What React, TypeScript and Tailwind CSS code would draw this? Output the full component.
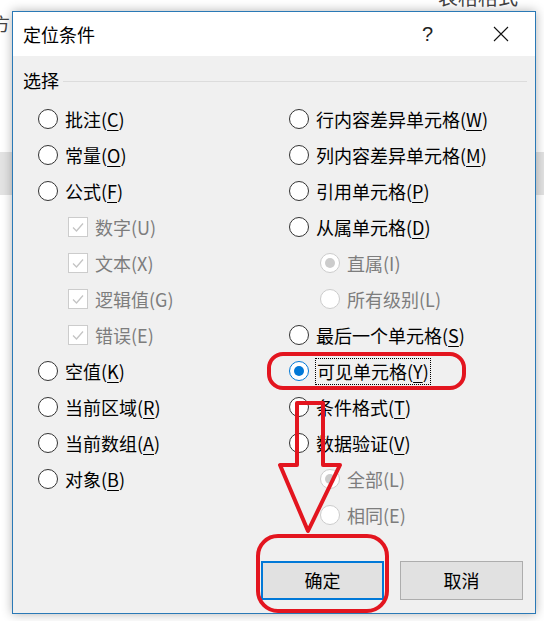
import React from "react";

type Item = {
  label: string;
  hotkey: string;
  kind: "radio" | "check";
  sub?: boolean;
  checked?: boolean;
  disabled?: boolean;
  focus?: boolean;
};

const leftItems: Item[] = [
  { label: "批注", hotkey: "C", kind: "radio" },
  { label: "常量", hotkey: "O", kind: "radio" },
  { label: "公式", hotkey: "F", kind: "radio" },
  { label: "数字", hotkey: "U", kind: "check", sub: true, checked: true, disabled: true },
  { label: "文本", hotkey: "X", kind: "check", sub: true, checked: true, disabled: true },
  { label: "逻辑值", hotkey: "G", kind: "check", sub: true, checked: true, disabled: true },
  { label: "错误", hotkey: "E", kind: "check", sub: true, checked: true, disabled: true },
  { label: "空值", hotkey: "K", kind: "radio" },
  { label: "当前区域", hotkey: "R", kind: "radio" },
  { label: "当前数组", hotkey: "A", kind: "radio" },
  { label: "对象", hotkey: "B", kind: "radio" },
];

const rightItems: Item[] = [
  { label: "行内容差异单元格", hotkey: "W", kind: "radio" },
  { label: "列内容差异单元格", hotkey: "M", kind: "radio" },
  { label: "引用单元格", hotkey: "P", kind: "radio" },
  { label: "从属单元格", hotkey: "D", kind: "radio" },
  { label: "直属", hotkey: "I", kind: "radio", sub: true, checked: true, disabled: true },
  { label: "所有级别", hotkey: "L", kind: "radio", sub: true, disabled: true },
  { label: "最后一个单元格", hotkey: "S", kind: "radio" },
  { label: "可见单元格", hotkey: "Y", kind: "radio", checked: true, focus: true },
  { label: "条件格式", hotkey: "T", kind: "radio" },
  { label: "数据验证", hotkey: "V", kind: "radio" },
  { label: "全部", hotkey: "L", kind: "radio", sub: true, checked: true, disabled: true },
  { label: "相同", hotkey: "E", kind: "radio", sub: true, disabled: true },
];

function Radio({ checked, disabled }: { checked?: boolean; disabled?: boolean }) {
  const ring = disabled ? "border-[#cccccc]" : checked ? "border-[#0078d7]" : "border-[#333333]";
  return (
    <span className={`w-[20px] h-[20px] shrink-0 rounded-full border bg-white flex items-center justify-center ${ring}`}>
      {checked && (
        <span className={`w-[10px] h-[10px] rounded-full ${disabled ? "bg-[#cccccc]" : "bg-[#0078d7]"}`} />
      )}
    </span>
  );
}

function Check() {
  return (
    <span className="w-[20px] h-[20px] shrink-0 border border-[#cccccc] bg-white flex items-center justify-center">
      <svg width="14" height="14" viewBox="0 0 14 14">
        <polyline points="2,7.5 5.5,11 12,3.5" fill="none" stroke="#c4c4c4" strokeWidth="1.3" />
      </svg>
    </span>
  );
}

function Option({ item, indent }: { item: Item; indent: string }) {
  const text = (
    <span className={item.disabled ? "text-[#7d7d7d]" : "text-black"}>
      {item.label}(
      {item.disabled ? item.hotkey : <u className="underline-offset-[3px]">{item.hotkey}</u>})
    </span>
  );
  return (
    <div className={`h-[36px] flex items-center gap-[6px] ${item.sub ? indent : ""}`}>
      {item.kind === "radio" ? <Radio checked={item.checked} disabled={item.disabled} /> : <Check />}
      {item.focus ? (
        <span className="border border-dotted border-black px-[1px] h-[27px] flex items-center">{text}</span>
      ) : (
        <span className="pl-[1px]">{text}</span>
      )}
    </div>
  );
}

function Spreadsheet() {
  return (
    <div className="w-[544px] h-[621px] bg-white bg-[linear-gradient(to_bottom,transparent_152px,#e3e3e3_152px,#e3e3e3_195px,transparent_195px),linear-gradient(#d9d9d9_1px,transparent_1px),linear-gradient(90deg,#d9d9d9_1px,transparent_1px)] bg-[size:100%_100%,104px_28px,104px_28px] bg-[position:0_0,25px_27px,25px_27px] bg-no-repeat">
      <div className="h-[11px] overflow-hidden">
        <div className="pl-[438px] -mt-[15px] text-[20px] text-[#444] leading-[24px]">表格格式</div>
      </div>
      <div className="-ml-[8px] mt-[2px] text-[18px] text-[#444] leading-[20px]">方</div>
    </div>
  );
}

export default function App() {
  return (
    <div className="relative w-[544px] h-[621px] overflow-hidden font-['Noto_Sans_CJK_SC','Microsoft_YaHei',sans-serif]">
      <Spreadsheet />

      <div className="absolute left-[12px] top-[11px] w-[524px] h-[603px] border border-[#2a79b6] bg-[#f0f0f0] flex flex-col shadow-[0_0_10px_rgba(0,0,0,0.3)]">
        <div className="h-[44px] bg-white flex items-center pl-[10px] shrink-0">
          <span className="text-[18px] leading-none text-black">定位条件</span>
          <span className="ml-auto text-[20px] font-light leading-none text-[#222] font-['Liberation_Sans',sans-serif]">?</span>
          <svg className="ml-[60px] mr-[26px]" width="16" height="16" viewBox="0 0 16 16">
            <path d="M1 1 L15 15 M15 1 L1 15" stroke="#111" strokeWidth="1.1" fill="none" />
          </svg>
        </div>

        <div className="flex-1 flex flex-col pt-[12px]">
          <div className="h-[24px] flex items-center pl-[10px] pr-[8px] gap-[4px]">
            <span className="text-[18px] leading-none">选择</span>
            <span className="flex-1 h-px bg-[#dcdcdc] mt-[2px]" />
          </div>

          <div className="flex mt-[9px] pl-[25px] text-[18px] leading-none">
            <div className="w-[251px] flex flex-col">
              {leftItems.map((it, i) => (
                <Option key={i} item={it} indent="pl-[30px]" />
              ))}
            </div>
            <div className="flex-1 flex flex-col">
              {rightItems.map((it, i) => (
                <Option key={i} item={it} indent="pl-[31px]" />
              ))}
            </div>
          </div>

          <div className="mt-auto flex justify-end gap-[16px] pr-[12px] pb-[13px]">
            <button className="w-[123px] h-[39px] bg-[#e1e1e1] border-2 border-[#0078d7] text-[18px] text-black">
              确定
            </button>
            <button className="w-[123px] h-[39px] bg-[#e1e1e1] border border-[#adadad] text-[18px] text-black">
              取消
            </button>
          </div>
        </div>
      </div>

      {/* red hand-drawn marks on top of the dialog */}
      <svg className="absolute left-0 top-0 pointer-events-none" width="544" height="621" viewBox="0 0 544 621">
        <rect x="269" y="354" width="195" height="34" rx="14" fill="none" stroke="#e3151f" strokeWidth="4" />
        <path d="M297 403 L323 403 L323 465 L340 465 L308 531 L280 465 L297 465 Z" fill="none" stroke="#e3151f" strokeWidth="4" strokeLinejoin="round" />
        <rect x="258" y="536" width="129" height="75" rx="20" fill="none" stroke="#e3151f" strokeWidth="4" />
      </svg>
    </div>
  );
}
